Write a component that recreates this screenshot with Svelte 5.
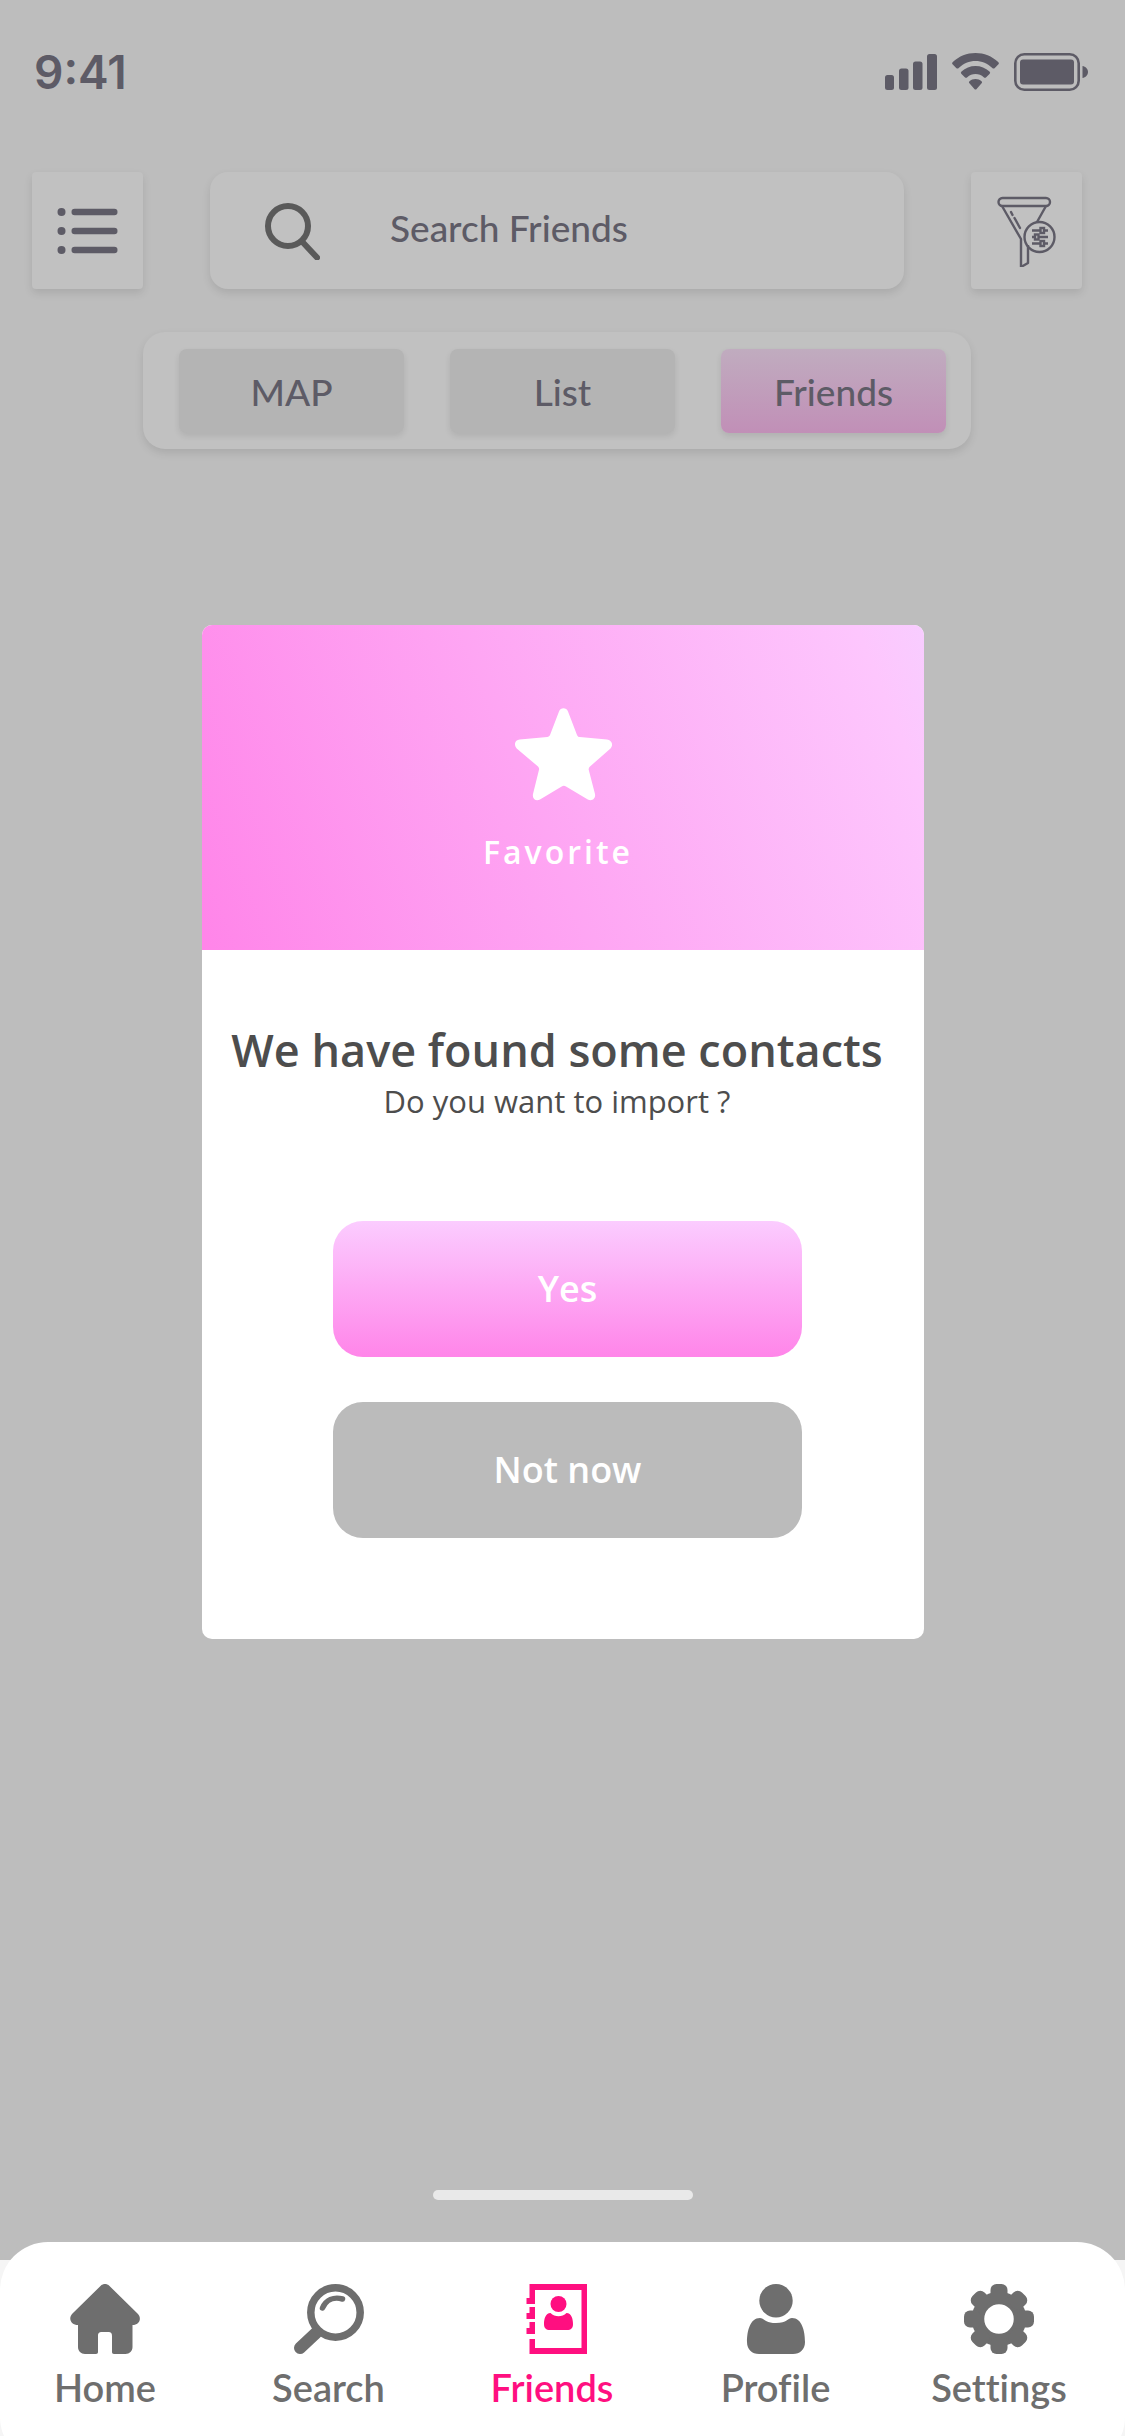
<script>
  let query = $state('');
  let view = $state('Friends');
  const views = ['MAP', 'List', 'Friends'];
  const links = ['Home', 'Search', 'Friends', 'Profile', 'Settings'];
  const teeth = [0, 45, 90, 135];
</script>

<div class="page">
  <main>
    <header class="status">
      <span class="time">9:41</span>
      <div class="indicators">
        <svg width="52" height="38" viewBox="0 0 52 38" aria-hidden="true">
          <rect x="0" y="22" width="9" height="15" rx="2.5" />
          <rect x="14" y="15.500" width="9.500" height="21.500" rx="2.500" />
          <rect x="28" y="8.500" width="9.500" height="28.500" rx="2.500" />
          <rect x="42" y="1" width="10" height="36" rx="2.500" />
        </svg>
        <svg width="47" height="38" viewBox="0 0 47 38" aria-hidden="true">
          <path d="M23.500 0C32 0 40 3.200 46.200 9a1.800 1.800 0 0 1 0 2.600L42.800 15a1.800 1.800 0 0 1-2.500 0C35.700 10.500 29.800 8 23.500 8S11.300 10.500 6.700 15a1.800 1.800 0 0 1-2.500 0L.8 11.600A1.800 1.800 0 0 1 .8 9C7 3.200 15 0 23.500 0Z" />
          <path d="M23.500 13c5.200 0 10.200 2 14 5.600a1.600 1.600 0 0 1 0 2.400l-3.300 3.200a1.800 1.800 0 0 1-2.500 0c-2.200-2-5.100-3.200-8.200-3.200s-6 1.200-8.200 3.200a1.800 1.800 0 0 1-2.500 0L9.500 21a1.600 1.600 0 0 1 0-2.400c3.800-3.600 8.800-5.600 14-5.600Z" />
          <path d="M23.500 26c2.300 0 4.400.8 6 2.200.7.700.7 1.500.1 2.100l-5 5.600c-.7.700-1.500.7-2.200 0l-5-5.600c-.6-.6-.6-1.400.1-2.100 1.600-1.400 3.700-2.200 6-2.200Z" />
        </svg>
        <svg width="74" height="38" viewBox="0 0 74 38" aria-hidden="true">
          <rect x="1.300" y="1.300" width="63.400" height="35.400" rx="9" fill="none" stroke="currentColor" stroke-width="2.600" />
          <rect x="6" y="6.500" width="54" height="25" rx="3" />
          <path d="M68.500 13c3 .5 5.500 3 5.500 6s-2.500 5.500-5.500 6Z" />
        </svg>
      </div>
    </header>

    <div class="toolbar">
      <button class="square" aria-label="Menu">
        <svg width="61" height="46" viewBox="0 0 61 46" aria-hidden="true">
          {#each [4, 23, 42] as y}
            <circle cx="4.500" cy={y} r="4" />
            <rect x="14.500" y={y - 3.200} width="46" height="6.400" rx="3.200" />
          {/each}
        </svg>
      </button>
      <label class="search">
        <svg width="56" height="58" viewBox="0 0 56 58" aria-hidden="true">
          <circle cx="24" cy="24" r="20" fill="none" stroke="#5a5a5a" stroke-width="6" />
          <path d="M38.500 40 53 55.500" stroke="#5a5a5a" stroke-width="6" stroke-linecap="round" />
        </svg>
        <input type="text" placeholder="Search Friends" aria-label="Search Friends" bind:value={query} />
      </label>
      <button class="square" aria-label="Filter">
        <svg width="59" height="72" viewBox="0 -2 59 72" fill="none" stroke="currentColor" stroke-width="2.400" aria-hidden="true">
          <rect x="1.500" y="1" width="51.500" height="8" rx="4" />
          <path d="M5 9 24 42v28l7-4V48M49 9l-9 16" stroke-linejoin="round" />
          <path d="m14 15 1.500 3M17.500 21l5.500 10" stroke-linecap="round" />
          <circle cx="42.500" cy="40" r="15" />
          <path d="M35 33.500h8m4 0h4M35 40h2.500m4 0H51M35 46.500h8m4 0h4" />
          <rect x="43.500" y="31" width="3.500" height="5" />
          <rect x="38" y="37.500" width="3.500" height="5" />
          <rect x="43.500" y="44" width="3.500" height="5" />
        </svg>
      </button>
    </div>

    <div class="tabs">
      {#each views as name}
        <button class:active={view === name} onclick={() => (view = name)}>{name}</button>
      {/each}
    </div>

    <div class="dialog" role="dialog" aria-labelledby="dialog-title">
      <div class="banner">
        <svg width="97" height="93" viewBox="0 0 97 93" aria-hidden="true">
          <path d="M44 3.500C45.500-.9 51.500-.9 53 3.500L62 27c.5 1.200 1.400 2 2.700 2.100L92 31.500c4.800.5 6.700 5.500 3.500 9L75 58.500c-1.100 1-1.500 2-1.300 3.300L80 86c.9 4.800-3.200 7.700-7.200 5.500L51 78.600c-1.400-1-2.900-1-4.300 0L25 91.500c-4 2.200-8-.7-7-5.500l6-24.200c.3-1.300 0-2.300-1-3.300L1.700 40.500C-1.500 37-.2 32 4.700 31.500L32.300 29c1.300-.1 2.200-.9 2.700-2Z" />
        </svg>
        <span>Favorite</span>
      </div>
      <div class="message">
        <h1 id="dialog-title">We have found some contacts</h1>
        <p>Do you want to import ?</p>
      </div>
      <div class="actions">
        <button class="yes">Yes</button>
        <button class="later">Not now</button>
      </div>
    </div>

    <div class="home-bar"></div>
  </main>

  <nav>
    {#each links as name}
      <a href="#{name.toLowerCase()}" class:current={name === 'Friends'}>
        <svg width="70" height="70" viewBox="0 0 70 70" aria-hidden="true">
          {#if name === 'Home'}
            <path d="M31 1.500c2.300-2 5.700-2 8 0L67.500 29.500c5 5 1.500 11.500-5 11.500v22c0 4-3 7-7 7H44c-1.300 0-2-.8-2-2V52c0-3-1-4-4-4h-6c-3 0-4 1-4 4v16c0 1.200-.7 2-2 2H15c-4 0-7-3-7-7V41C1.500 41-2.500 34.500 2.500 29.500Z" />
          {:else if name === 'Search'}
            <circle cx="41.500" cy="28.500" r="24.700" fill="none" stroke="currentColor" stroke-width="7.500" />
            <path d="M22 49 6 64" stroke="currentColor" stroke-width="12" stroke-linecap="round" />
            <path d="M28.500 24c3.500-8 11-11.500 20-9" fill="none" stroke="currentColor" stroke-width="5.500" stroke-linecap="round" />
          {:else if name === 'Friends'}
            <path d="M12.500 0H70v70H12.500V55H18v9h46.500V6H18v14H9.500v-6h3ZM12.500 23H18v12H9.500v-6h3ZM12.500 38H18v12H9.500v-6h3Z" />
            <circle cx="41.500" cy="20" r="8" />
            <path d="M33.500 29c4.500 4.300 11.500 4.300 16 0 5 0 6.500 6 6.500 11 0 4-2 6-6 6H33c-4 0-6-2-6-6 0-5 1.500-11 6.500-11Z" />
          {:else if name === 'Profile'}
            <circle cx="35" cy="16.700" r="16.700" />
            <path d="M19 34c4 0 5 5 16 5s12-5 16-5c10 0 13 13 13 24 0 7.500-5 12-12 12H18C11 70 6 65.500 6 58c0-11 3-24 13-24Z" />
          {:else}
            <circle cx="35" cy="35" r="21" fill="none" stroke="currentColor" stroke-width="12.500" />
            {#each teeth as angle}
              <g transform="rotate({angle} 35 35)">
                <rect x="26.500" y="0" width="17" height="17" rx="6" />
                <rect x="26.500" y="53" width="17" height="17" rx="6" />
              </g>
            {/each}
          {/if}
        </svg>
        <span>{name}</span>
      </a>
    {/each}
  </nav>
</div>

<style>
  :global(body) {
    margin: 0;
    background: #f5f5f5;
  }
  .page {
    display: flex;
    flex-direction: column;
    min-height: 100vh;
    overflow: hidden;
    font-family: Lato, "Liberation Sans", sans-serif;
    font-variant-ligatures: none;
  }
  main {
    flex: 1;
    display: flex;
    flex-direction: column;
    background: #bdbdbd;
    color: #5d5b66;
  }
  button, input {
    font: inherit;
    color: inherit;
    border: 0;
    padding: 0;
    margin: 0;
  }
  svg {
    display: block;
    fill: currentColor;
  }
  svg[fill="none"] {
    fill: none;
  }
  .status {
    display: flex;
    justify-content: space-between;
    align-items: center;
    padding: 44px 37px 72px 34px;
  }
  .time {
    font: 600 46px/56px Inter, sans-serif;
  }
  .indicators {
    display: flex;
    gap: 15px;
  }
  .toolbar {
    display: flex;
    gap: 67px;
    padding: 0 43px 0 32px;
  }
  .square {
    display: grid;
    place-items: center;
    width: 111px;
    height: 117px;
    border-radius: 4px;
    background: #c1c1c1;
    box-shadow: 0 4px 8px rgba(0, 0, 0, 0.1);
  }
  .search {
    flex: 1;
    display: flex;
    align-items: center;
    gap: 70px;
    padding-left: 54px;
    border-radius: 18px;
    background: #c1c1c1;
    box-shadow: 0 4px 8px rgba(0, 0, 0, 0.1);
  }
  .search input {
    flex: 1;
    min-width: 0;
    padding-bottom: 6px;
    background: none;
    outline: none;
    font-size: 37px;
    font-weight: 500;
  }
  .search input::placeholder {
    color: #5d5b66;
    opacity: 1;
  }
  .tabs {
    display: flex;
    gap: 46px;
    margin: 43px 154px 0 143px;
    padding: 17px 25px 16px 36px;
    border-radius: 22px;
    background: #c1c1c1;
    box-shadow: 0 4px 8px rgba(0, 0, 0, 0.1);
  }
  .tabs button {
    flex: 1;
    height: 84px;
    border-radius: 8px;
    background: #b4b4b4;
    box-shadow: 0 3px 6px rgba(0, 0, 0, 0.09);
    font-size: 37px;
    font-weight: 500;
  }
  .tabs .active {
    background: linear-gradient(#c0acbf, #c18fb7);
  }
  .dialog {
    margin: 176px 201px 0 202px;
    padding-bottom: 101px;
    border-radius: 10px;
    overflow: hidden;
    background: #fff;
    color: #4d4d4d;
    font-family: "Open Sans", "Noto Sans", sans-serif;
  }
  .banner {
    display: flex;
    flex-direction: column;
    align-items: center;
    gap: 29px;
    padding: 83px 0 76px;
    background: linear-gradient(68deg, #ff85e9, #fdc6fd 92%, #f8cdff);
    color: #fff;
    font-size: 32px;
    font-weight: 600;
    line-height: 44px;
    letter-spacing: 3px;
  }
  .banner span {
    padding-right: 10px;
  }
  .message {
    padding: 70px 0 98px;
    text-align: center;
  }
  h1, p {
    margin: 0;
    padding-right: 12px;
  }
  h1 {
    font-size: 45px;
    font-weight: 600;
    line-height: 60px;
    white-space: nowrap;
  }
  p {
    font-size: 31px;
    line-height: 43px;
  }
  .actions {
    display: flex;
    flex-direction: column;
    gap: 45px;
    padding: 0 122px 0 131px;
  }
  .actions button {
    height: 136px;
    padding-bottom: 2px;
    border-radius: 30px;
    color: #fff;
    font-size: 36px;
    font-weight: 600;
  }
  .yes {
    background: linear-gradient(#fbccff, #ff85e9);
  }
  .later {
    background: #bbb;
  }
  .home-bar {
    width: 260px;
    height: 10px;
    margin: auto auto 60px;
    border-radius: 5px;
    background: #e9e9e9;
  }
  nav {
    display: flex;
    justify-content: space-between;
    margin: -18px 0 -29px;
    padding: 42px 46px 58px 25px;
    border-radius: 48px;
    background: #fff;
  }
  nav a {
    display: flex;
    flex-direction: column;
    align-items: center;
    gap: 14px;
    width: 160px;
    color: #6e6e6e;
    font-size: 38px;
    font-weight: 600;
    line-height: 39px;
    text-decoration: none;
  }
  nav .current {
    color: #ff0f80;
  }
</style>
